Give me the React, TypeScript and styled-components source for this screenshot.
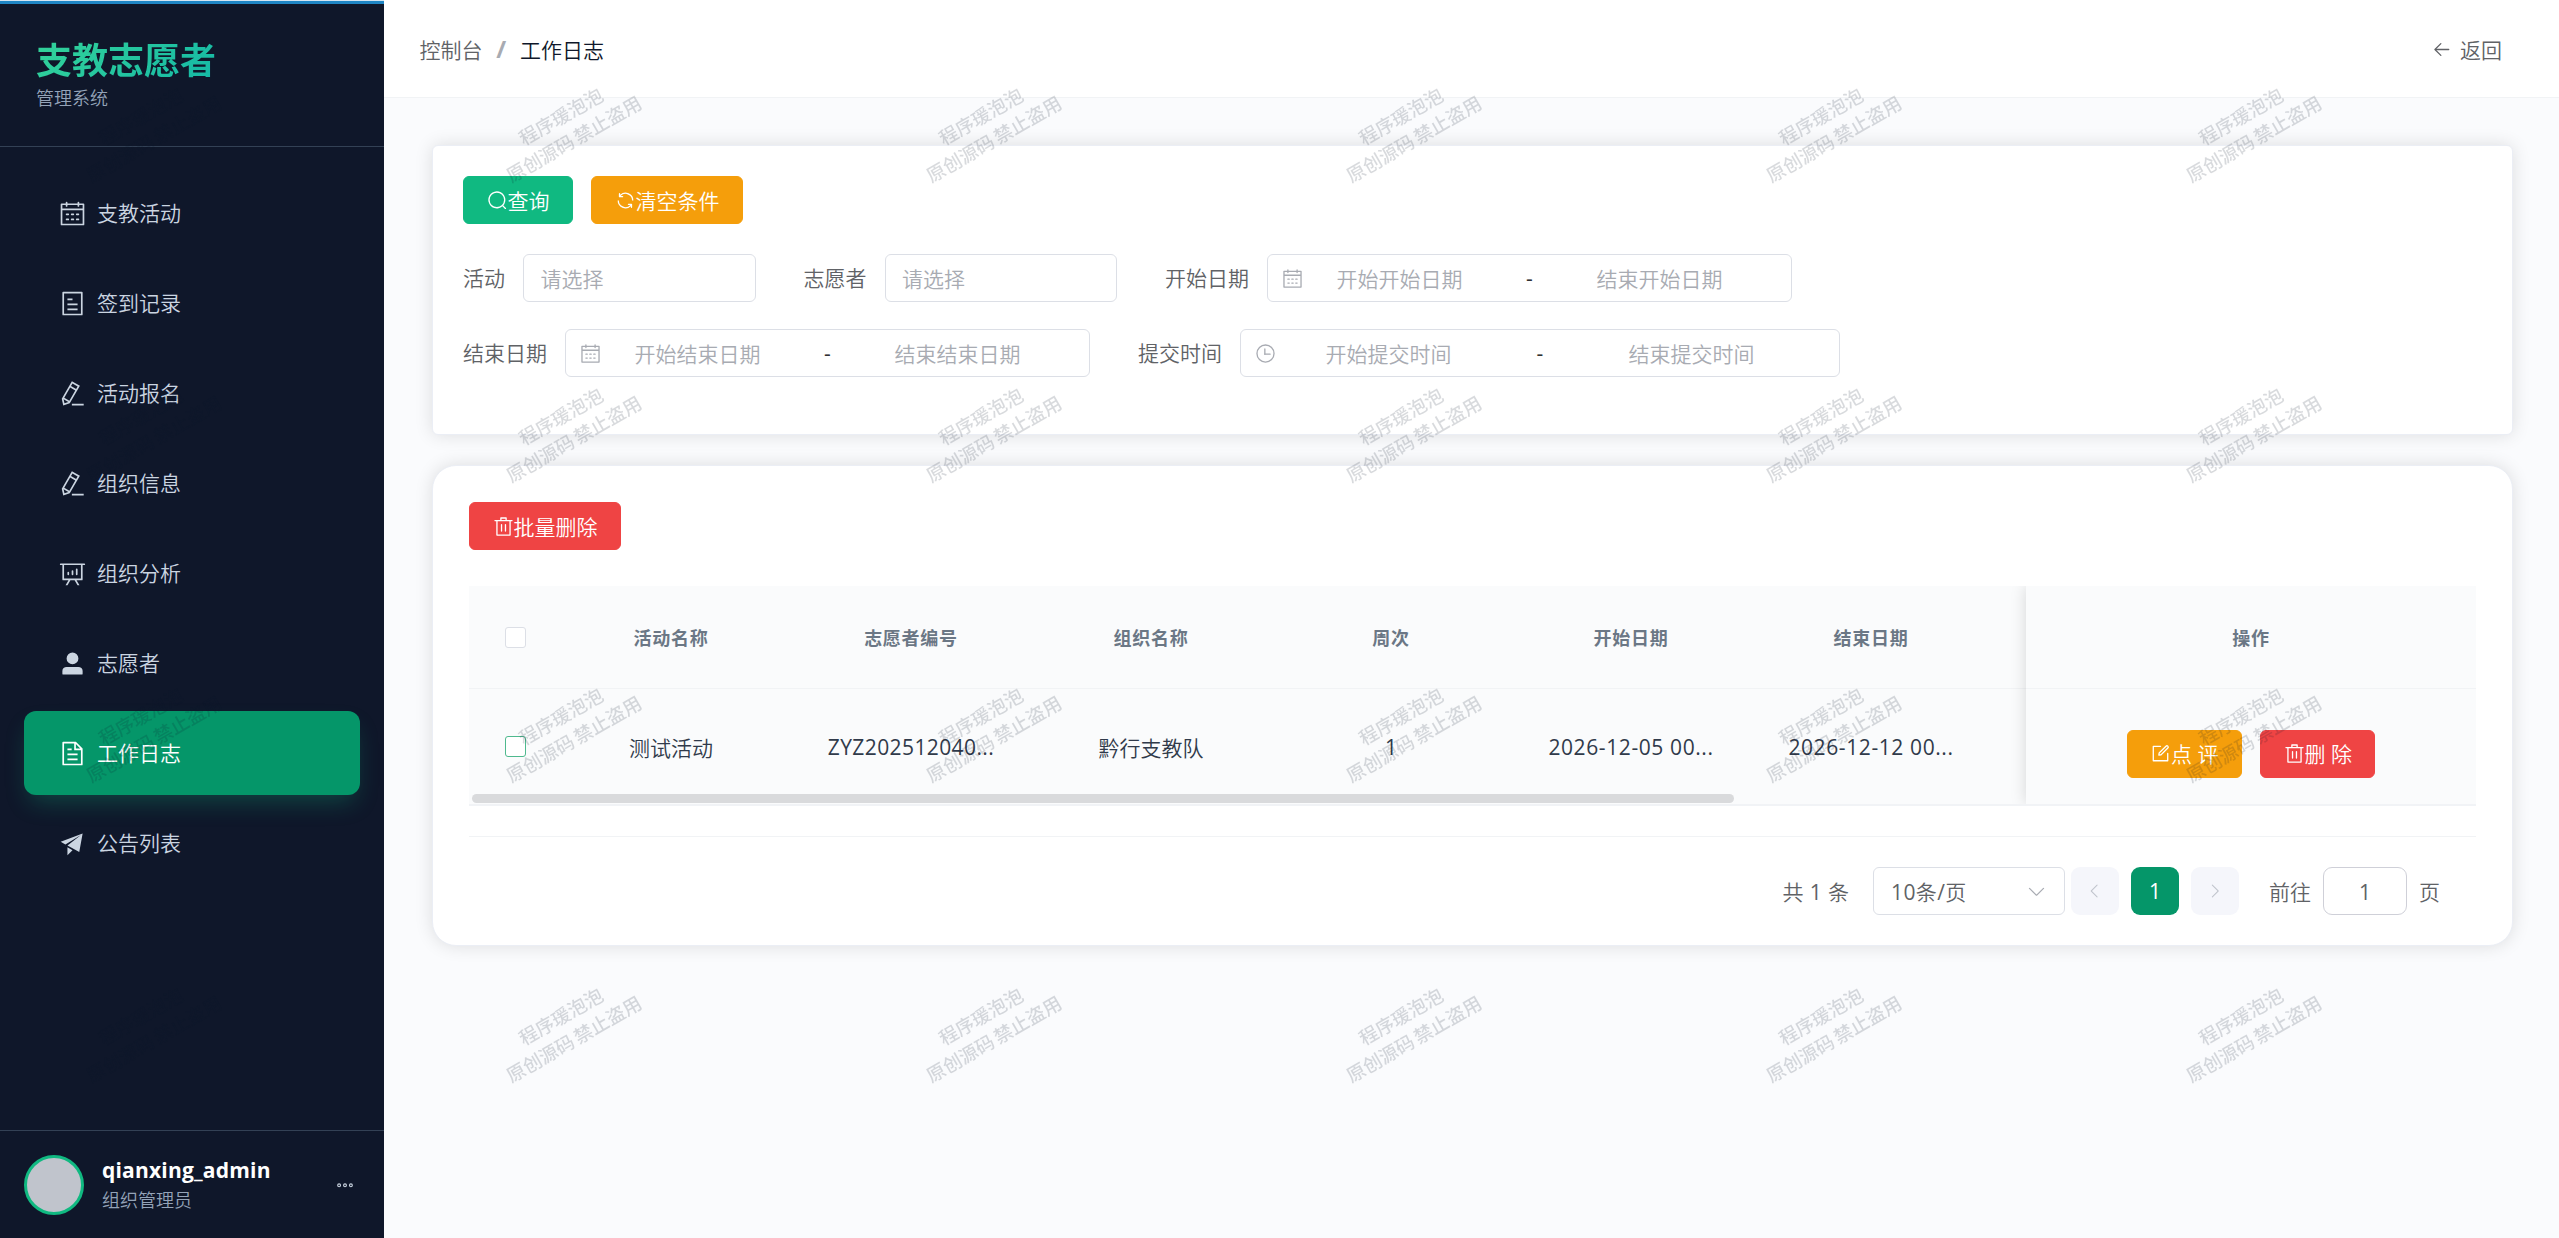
import React from "react";
import styled, { createGlobalStyle, css } from "styled-components";

const STRONG_FONT = `"Open Sans", "Noto Sans CJK SC", sans-serif`;

const GlobalStyle = createGlobalStyle`
  *, *::before, *::after { box-sizing: border-box; }
  html, body { margin: 0; padding: 0; }
  body {
    font-family: "Open Sans", "Noto Sans CJK SC DemiLight", "Noto Sans CJK SC Light", "Noto Sans CJK SC", sans-serif;
    font-size: 21px;
    color: #303133;
    background: #fafbfd;
    overflow: hidden;
  }
  button, input { font-family: inherit; }
`;

const ICONS = {
  calendar: [
    "M128 384v512h768V192H768v32a32 32 0 1 1-64 0v-32H320v32a32 32 0 0 1-64 0v-32H128v128h768v64zm192-256h384V96a32 32 0 1 1 64 0v32h160a32 32 0 0 1 32 32v768a32 32 0 0 1-32 32H96a32 32 0 0 1-32-32V160a32 32 0 0 1 32-32h160V96a32 32 0 0 1 64 0zm-32 384h64a32 32 0 0 1 0 64h-64a32 32 0 0 1 0-64m0 192h64a32 32 0 1 1 0 64h-64a32 32 0 1 1 0-64m192-192h64a32 32 0 0 1 0 64h-64a32 32 0 0 1 0-64m0 192h64a32 32 0 1 1 0 64h-64a32 32 0 1 1 0-64m192-192h64a32 32 0 1 1 0 64h-64a32 32 0 1 1 0-64m0 192h64a32 32 0 1 1 0 64h-64a32 32 0 1 1 0-64",
  ],
  tickets: [
    "M192 128v768h640V128zm-32-64h704a32 32 0 0 1 32 32v832a32 32 0 0 1-32 32H160a32 32 0 0 1-32-32V96a32 32 0 0 1 32-32m160 448h384v64H320zm0-192h192v64H320zm0 384h384v64H320z",
  ],
  editPen: [
    "m199.04 672.64 193.984 112 224-387.968-193.92-112-224 388.032zm-23.872 60.16 32.896 148.288 144.896-45.696zM455.04 229.248l193.92 112 56.704-98.112-193.984-112zM104.32 708.8l384-665.024 304.768 175.936L409.152 884.8h.064l-248.448 78.336zm384 254.272v-64h448v64z",
  ],
  analysis: [
    "m665.216 768 110.848 192h-73.856L591.36 768H433.024L322.176 960H248.32l110.848-192H160a32 32 0 0 1-32-32V192H64a32 32 0 0 1 0-64h896a32 32 0 1 1 0 64h-64v544a32 32 0 0 1-32 32zM832 192H192v512h640zM352 448a32 32 0 0 1 32 32v64a32 32 0 0 1-64 0v-64a32 32 0 0 1 32-32m160-64a32 32 0 0 1 32 32v128a32 32 0 0 1-64 0V416a32 32 0 0 1 32-32m160-64a32 32 0 0 1 32 32v192a32 32 0 1 1-64 0V352a32 32 0 0 1 32-32",
  ],
  user: [
    "M288 320a224 224 0 1 0 448 0 224 224 0 1 0-448 0m544 608H160a32 32 0 0 1-32-32v-96a160 160 0 0 1 160-160h448a160 160 0 0 1 160 160v96a32 32 0 0 1-32 32z",
  ],
  document: [
    "M832 384H576V128H192v768h640zm-26.496-64L640 154.496V320zM160 64h480l256 256v608a32 32 0 0 1-32 32H160a32 32 0 0 1-32-32V96a32 32 0 0 1 32-32m160 448h384v64H320zm0-192h160v64H320zm0 384h384v64H320z",
  ],
  promotion: ["m64 448 832-320-128 704-446.08-243.328L832 192 242.816 545.536zm256 512V657.024L512 768z"],
  more: [
    "M176 416a112 112 0 1 0 0 224 112 112 0 0 0 0-224m0 64a48 48 0 1 1 0 96 48 48 0 0 1 0-96m336-64a112 112 0 1 1 0 224 112 112 0 0 1 0-224m0 64a48 48 0 1 0 0 96 48 48 0 0 0 0-96m336-64a112 112 0 1 1 0 224 112 112 0 0 1 0-224m0 64a48 48 0 1 0 0 96 48 48 0 0 0 0-96",
  ],
  back: [
    "M224 480h640a32 32 0 1 1 0 64H224a32 32 0 0 1 0-64",
    "m237.248 512 265.408 265.344a32 32 0 0 1-45.312 45.312l-288-288a32 32 0 0 1 0-45.312l288-288a32 32 0 1 1 45.312 45.312z",
  ],
  search: [
    "m795.904 750.72 124.992 124.928a32 32 0 0 1-45.248 45.248L750.656 795.904a416 416 0 1 1 45.248-45.248zM480 832a352 352 0 1 0 0-704 352 352 0 0 0 0 704",
  ],
  refresh: [
    "M771.776 794.88A384 384 0 0 1 128 512h64a320 320 0 0 0 555.712 216.448H654.72a32 32 0 1 1 0-64h149.056a32 32 0 0 1 32 32v148.928a32 32 0 1 1-64 0v-50.56zM276.288 295.616h92.992a32 32 0 0 1 0 64H220.16a32 32 0 0 1-32-32V178.56a32 32 0 0 1 64 0v50.56A384 384 0 0 1 896.128 512h-64a320 320 0 0 0-555.776-216.384z",
  ],
  trash: [
    "M160 256H96a32 32 0 0 1 0-64h256V95.936a32 32 0 0 1 32-32h256a32 32 0 0 1 32 32V192h256a32 32 0 1 1 0 64h-64v672a32 32 0 0 1-32 32H192a32 32 0 0 1-32-32zm448-64v-64H416v64zM224 896h576V256H224zm192-128a32 32 0 0 1-32-32V416a32 32 0 0 1 64 0v320a32 32 0 0 1-32 32m192 0a32 32 0 0 1-32-32V416a32 32 0 0 1 64 0v320a32 32 0 0 1-32 32",
  ],
  edit: [
    "M832 512a32 32 0 1 1 64 0v352a32 32 0 0 1-32 32H160a32 32 0 0 1-32-32V160a32 32 0 0 1 32-32h352a32 32 0 0 1 0 64H192v640h640z",
    "m469.952 554.24 52.8-7.552L847.104 222.4a32 32 0 1 0-45.248-45.248L477.44 501.44l-7.552 52.8zm422.4-422.4a96 96 0 0 1 0 135.808l-331.84 331.84a32 32 0 0 1-18.112 9.088L436.8 623.68a32 32 0 0 1-36.224-36.224l15.104-105.6a32 32 0 0 1 9.024-18.112l331.904-331.84a96 96 0 0 1 135.744 0z",
  ],
  clock: [
    "M512 896a384 384 0 1 0 0-768 384 384 0 0 0 0 768m0 64a448 448 0 1 1 0-896 448 448 0 0 1 0 896",
    "M480 256a32 32 0 0 1 32 32v256a32 32 0 0 1-64 0V288a32 32 0 0 1 32-32",
    "M480 512h256q32 0 32 32t-32 32H480q-32 0-32-32t32-32",
  ],
  arrowDown: [
    "M831.872 340.864 512 652.672 192.128 340.864a30.592 30.592 0 0 0-42.752 0 29.12 29.12 0 0 0 0 41.6L489.664 714.24a32 32 0 0 0 44.672 0l340.288-331.712a29.12 29.12 0 0 0 0-41.728 30.592 30.592 0 0 0-42.752 0z",
  ],
  arrowLeft: [
    "M609.408 149.376 277.76 489.6a32 32 0 0 0 0 44.672l331.648 340.352a29.12 29.12 0 0 0 41.728 0 30.592 30.592 0 0 0 0-42.752L339.264 511.936l311.872-319.872a30.592 30.592 0 0 0 0-42.688 29.12 29.12 0 0 0-41.728 0",
  ],
  arrowRight: [
    "M340.864 149.312a30.592 30.592 0 0 0 0 42.752L652.736 512 340.864 831.872a30.592 30.592 0 0 0 0 42.752 29.12 29.12 0 0 0 41.728 0L714.24 534.336a32 32 0 0 0 0-44.672L382.592 149.376a29.12 29.12 0 0 0-41.728 0z",
  ],
};
type IconName = keyof typeof ICONS;

const Svg = styled.svg<{ $size: number }>`
  width: ${(p) => p.$size}px;
  height: ${(p) => p.$size}px;
  flex: none;
  display: block;
  fill: currentColor;
`;

const Icon = ({ name, size = 21 }: { name: IconName; size?: number }) => (
  <Svg viewBox="0 0 1024 1024" $size={size}>
    {ICONS[name].map((d) => (
      <path key={d} d={d} />
    ))}
  </Svg>
);

const Shell = styled.div`
  display: flex;
  width: 100%;
  height: 1238px;
  overflow: hidden;
`;

/* ---- sidebar ---- */
const Sidebar = styled.aside`
  width: 384px;
  flex: none;
  display: flex;
  flex-direction: column;
  background: #0f172a;
  border-top: 1px solid #d5e6f2;
`;

const TopStrip = styled.div`
  height: 3px;
  flex: none;
  background: #1f86c4;
`;

const Brand = styled.div`
  height: 143px;
  padding: 30px 36px 0;
  border-bottom: 1px solid #334155;
`;

const BrandTitle = styled.h1`
  margin: 0;
  width: fit-content;
  font-family: ${STRONG_FONT};
  font-size: 36px;
  line-height: 54px;
  font-weight: 700;
  background: linear-gradient(135deg, #34d399, #14b8a6);
  -webkit-background-clip: text;
  background-clip: text;
  color: transparent;
`;

const BrandSub = styled.div`
  font-size: 18px;
  line-height: 24px;
  margin-top: -2px;
  color: #94a3b8;
`;

const Menu = styled.nav`
  flex: 1;
  display: flex;
  flex-direction: column;
  gap: 6px;
  padding: 24px 24px 0;
`;

const MenuItem = styled.a<{ $active?: boolean }>`
  display: flex;
  align-items: center;
  height: 84px;
  padding-left: 30px;
  gap: 7px;
  border-radius: 12px;
  color: #cbd5e1;
  ${(p) =>
    p.$active &&
    css`
      color: #fff;
      background: #059669;
      box-shadow: 0 12px 24px -6px rgba(16, 185, 129, 0.3);
    `}
`;

const MenuIcon = styled.span`
  width: 36px;
  display: flex;
  justify-content: center;
`;

const MenuLabel = styled.span`
  padding-bottom: 3px;
`;

const UserBar = styled.div`
  height: 108px;
  display: flex;
  align-items: center;
  padding: 0 30px 0 24px;
  border-top: 1px solid #334155;
`;

const Avatar = styled.div`
  width: 60px;
  height: 60px;
  border-radius: 50%;
  border: 3px solid #10b981;
  background: #c0c4cc;
`;

const UserText = styled.div`
  flex: 1;
  margin-left: 18px;
  padding-top: 1px;
`;

const UserName = styled.div`
  font-size: 21px;
  line-height: 30px;
  letter-spacing: 0.2px;
  font-weight: 700;
  color: #fff;
`;

const UserRole = styled.div`
  font-size: 18px;
  line-height: 30px;
  color: #94a3b8;
`;

const MoreButton = styled.span`
  color: #cbd5e1;
`;

/* ---- main ---- */
const Main = styled.main`
  flex: 1;
  min-width: 0;
  display: flex;
  flex-direction: column;
  background: #fafbfd;
`;

const Header = styled.header`
  height: 98px;
  flex: none;
  display: flex;
  align-items: center;
  justify-content: space-between;
  padding: 0 57px 0 35.5px;
  background: #fff;
  border-bottom: 1px solid #f1f3f5;
`;

const Crumbs = styled.div`
  display: flex;
  align-items: center;
  color: #606266;
`;

const CrumbSep = styled.span`
  width: 37.5px;
  text-align: center;
  font-weight: 700;
  font-size: 24px;
  line-height: 28px;
  color: #a8abb2;
`;

const CrumbHere = styled.span`
  color: #0f172a;
`;

const BackLink = styled.a`
  display: flex;
  align-items: center;
  gap: 8px;
  color: #606266;
  svg { margin-top: 2px; }
`;

const Content = styled.div`
  display: flex;
  flex-direction: column;
  gap: 30px;
  padding: 47px 46px 0 48px;
`;

const Card = styled.section<{ $radius: number; $padding: string }>`
  background: #fff;
  border: 1px solid #ebeef5;
  border-radius: ${(p) => p.$radius}px;
  padding: ${(p) => p.$padding};
  box-shadow: 0 0 18px rgba(0, 0, 0, 0.12);
`;

const ButtonRow = styled.div<{ $center?: boolean }>`
  display: flex;
  gap: 18px;
  justify-content: ${(p) => (p.$center ? "center" : "flex-start")};
`;

const Button = styled.button<{ $tone: string }>`
  display: flex;
  align-items: center;
  height: 48px;
  padding: 0 22.5px;
  border: 1px solid ${(p) => p.$tone};
  border-radius: 6px;
  background: ${(p) => p.$tone};
  color: #fff;
  font-size: 21px;
  line-height: 21px;
  white-space: pre;
`;

const ButtonLabel = styled.span`
  padding-top: 2px;
`;

const FormRow = styled.div<{ $top: number }>`
  display: flex;
  gap: 48px;
  margin-top: ${(p) => p.$top}px;
`;

const Field = styled.div`
  display: flex;
  align-items: center;
  gap: 18px;
  height: 48px;
  color: #606266;
`;

const FieldLabel = styled.span`
  padding-bottom: 2px;
`;

const SelectBox = styled.div`
  width: 232.5px;
  height: 48px;
  display: flex;
  align-items: center;
  padding: 0 16.5px;
  border: 1px solid #dcdfe6;
  border-radius: 6px;
  color: #a8abb2;
`;

const RangeBox = styled.div<{ $width: number }>`
  width: ${(p) => p.$width}px;
  height: 48px;
  display: flex;
  align-items: center;
  padding: 0 35px 0 14px;
  border: 1px solid #dcdfe6;
  border-radius: 6px;
  color: #a8abb2;
`;

const RangePart = styled.span`
  flex: 39;
  text-align: center;
`;

const RangeDash = styled.span`
  flex: 13.5;
  text-align: center;
  color: #303133;
`;

/* ---- table ---- */
const TableFrame = styled.div`
  display: flex;
  height: 220px;
  margin-top: 36px;
  border-bottom: 2px solid #f1f3f6;
  overflow: hidden;
`;

const ScrollPane = styled.div`
  position: relative;
  width: 1557px;
  flex: none;
  overflow: hidden;
`;

const FixedPane = styled.div`
  position: relative;
  flex: 1;
  box-shadow: 0 0 15px rgba(0, 0, 0, 0.15);
`;

const Row = styled.div<{ $head?: boolean; $cols: string }>`
  display: grid;
  grid-template-columns: ${(p) => p.$cols};
  align-items: center;
  justify-items: center;
  background: #fafbfc;
  ${(p) =>
    p.$head
      ? css`
          height: 103px;
          border-bottom: 1px solid #f1f3f5;
          font-family: ${STRONG_FONT};
          font-size: 18px;
          letter-spacing: 0.75px;
          font-weight: 700;
          color: #6b7785;
        `
      : css`
          height: 115px;
          color: #303a4a;
        `}
`;

const Cell = styled.div<{ $spacing?: number }>`
  white-space: nowrap;
  letter-spacing: ${(p) => (p.$spacing === undefined ? "inherit" : `${p.$spacing}px`)};
`;

const Check = styled.span<{ $hot?: boolean }>`
  width: 21px;
  height: 21px;
  margin-left: 10px;
  border: 1px solid ${(p) => (p.$hot ? "#4fb98e" : "#dcdfe6")};
  border-radius: 3px;
  background: #fff;
`;

const ActionCell = styled.div`
  padding-top: 14px;
`;

const ScrollThumb = styled.div`
  position: absolute;
  left: 3px;
  bottom: 1px;
  width: 1262px;
  height: 9px;
  border-radius: 4.5px;
  background: #d9dadc;
`;

const TableBody = styled.div`
  height: 117px;
  background: #fafbfc;
`;

/* ---- pagination ---- */
const Pager = styled.div`
  display: flex;
  align-items: center;
  margin-top: 30px;
  padding: 30px 36px 0 0;
  border-top: 1px solid #f1f3f5;
  justify-content: flex-end;
  color: #606266;
`;

const Total = styled.span`
  margin-right: 23.5px;
  letter-spacing: 0.4px;
`;

const SizeSelect = styled.div`
  width: 192px;
  height: 48px;
  display: flex;
  align-items: center;
  justify-content: space-between;
  padding: 0 17px;
  border: 1px solid #dcdfe6;
  border-radius: 6px;
  letter-spacing: 0.4px;
  svg { color: #a8abb2; }
`;

const PageButton = styled.span<{ $active?: boolean; $left: number }>`
  width: 48px;
  height: 48px;
  margin-left: ${(p) => p.$left}px;
  display: flex;
  align-items: center;
  justify-content: center;
  border-radius: 9px;
  background: ${(p) => (p.$active ? "#059669" : "#f5f6fb")};
  color: ${(p) => (p.$active ? "#fff" : "#c0c4cc")};
`;

const JumpLabel = styled.span<{ $left: number }>`
  margin-left: ${(p) => p.$left}px;
`;

const JumpInput = styled.div`
  width: 84px;
  height: 48px;
  margin-left: 12px;
  display: flex;
  align-items: center;
  justify-content: center;
  padding-top: 1px;
  border: 1px solid #cfd0d8;
  border-radius: 9px;
`;

/* ---- watermark ---- */
const WatermarkLayer = styled.div`
  position: fixed;
  inset: 0;
  overflow: hidden;
  pointer-events: none;
`;

const WatermarkGrid = styled.div`
  display: grid;
  grid-template-columns: repeat(6, 420px);
  grid-auto-rows: 300px;
  margin: -23px 0 0 -63px;
`;

const WatermarkTile = styled.div`
  display: flex;
  align-items: center;
  justify-content: center;
`;

const WatermarkText = styled.div`
  transform: rotate(-30deg);
  text-align: center;
  font-family: "Open Sans", "Noto Sans CJK SC Medium", "Noto Sans CJK SC", sans-serif;
  font-size: 18.7px;
  line-height: 25.5px;
  word-spacing: -2px;
  color: rgba(15, 23, 42, 0.16);
  white-space: nowrap;
`;

const MENU: { icon: IconName; label: string; active?: boolean }[] = [
  { icon: "calendar", label: "支教活动" },
  { icon: "tickets", label: "签到记录" },
  { icon: "editPen", label: "活动报名" },
  { icon: "editPen", label: "组织信息" },
  { icon: "analysis", label: "组织分析" },
  { icon: "user", label: "志愿者" },
  { icon: "document", label: "工作日志", active: true },
  { icon: "promotion", label: "公告列表" },
];

const COLUMNS = [
  { title: "活动名称", value: "测试活动", spacing: 0 },
  { title: "志愿者编号", value: "ZYZ202512040...", spacing: 0.4 },
  { title: "组织名称", value: "黔行支教队", spacing: 0 },
  { title: "周次", value: "1", spacing: 0 },
  { title: "开始日期", value: "2026-12-05 00...", spacing: 0.6 },
  { title: "结束日期", value: "2026-12-12 00...", spacing: 0.6 },
];

const DATA_COLS = "82px repeat(7, 240px)";

const ActionButton = ({ tone, icon, label }: { tone: string; icon: IconName; label: string }) => (
  <Button $tone={tone}>
    <Icon name={icon} />
    <ButtonLabel>{label}</ButtonLabel>
  </Button>
);

const SelectField = ({ label }: { label: string }) => (
  <Field>
    <FieldLabel>{label}</FieldLabel>
    <SelectBox>请选择</SelectBox>
  </Field>
);

const RangeField = ({ label, icon = "calendar", width = 525 }: { label: string; icon?: IconName; width?: number }) => (
  <Field>
    <FieldLabel>{label}</FieldLabel>
    <RangeBox $width={width}>
      <Icon name={icon} />
      <RangePart>开始{label}</RangePart>
      <RangeDash>-</RangeDash>
      <RangePart>结束{label}</RangePart>
    </RangeBox>
  </Field>
);

export default function App() {
  return (
    <>
      <GlobalStyle />
      <Shell>
        <Sidebar>
          <TopStrip />
          <Brand>
            <BrandTitle>支教志愿者</BrandTitle>
            <BrandSub>管理系统</BrandSub>
          </Brand>
          <Menu>
            {MENU.map((m) => (
              <MenuItem key={m.label} $active={m.active}>
                <MenuIcon>
                  <Icon name={m.icon} size={27} />
                </MenuIcon>
                <MenuLabel>{m.label}</MenuLabel>
              </MenuItem>
            ))}
          </Menu>
          <UserBar>
            <Avatar />
            <UserText>
              <UserName>qianxing_admin</UserName>
              <UserRole>组织管理员</UserRole>
            </UserText>
            <MoreButton>
              <Icon name="more" size={18} />
            </MoreButton>
          </UserBar>
        </Sidebar>
        <Main>
          <Header>
            <Crumbs>
              <span>控制台</span>
              <CrumbSep>/</CrumbSep>
              <CrumbHere>工作日志</CrumbHere>
            </Crumbs>
            <BackLink>
              <Icon name="back" />
              返回
            </BackLink>
          </Header>
          <Content>
            <Card $radius={6} $padding="30px">
              <ButtonRow>
                <ActionButton tone="#10b981" icon="search" label="查询" />
                <ActionButton tone="#f59e0b" icon="refresh" label="清空条件" />
              </ButtonRow>
              <FormRow $top={30}>
                <SelectField label="活动" />
                <SelectField label="志愿者" />
                <RangeField label="开始日期" />
              </FormRow>
              <FormRow $top={27}>
                <RangeField label="结束日期" />
                <RangeField label="提交时间" icon="clock" width={600} />
              </FormRow>
              <FormRow $top={27} />
            </Card>
            <Card $radius={24} $padding="36px 36px 30px">
              <ButtonRow>
                <ActionButton tone="#ef4444" icon="trash" label="批量删除" />
              </ButtonRow>
              <TableFrame>
                <ScrollPane>
                  <Row $head $cols={DATA_COLS}>
                    <Check />
                    {COLUMNS.map((c) => (
                      <Cell key={c.title}>{c.title}</Cell>
                    ))}
                  </Row>
                  <TableBody>
                    <Row $cols={DATA_COLS}>
                      <Check $hot />
                      {COLUMNS.map((c) => (
                        <Cell key={c.title} $spacing={c.spacing}>
                          {c.value}
                        </Cell>
                      ))}
                    </Row>
                  </TableBody>
                  <ScrollThumb />
                </ScrollPane>
                <FixedPane>
                  <Row $head $cols="1fr">
                    <Cell>操作</Cell>
                  </Row>
                  <TableBody>
                    <Row $cols="1fr">
                      <ActionCell>
                        <ButtonRow $center>
                          <ActionButton tone="#f59e0b" icon="edit" label="点 评" />
                          <ActionButton tone="#ef4444" icon="trash" label="删 除" />
                        </ButtonRow>
                      </ActionCell>
                    </Row>
                  </TableBody>
                </FixedPane>
              </TableFrame>
              <Pager>
                <Total>共 1 条</Total>
                <SizeSelect>
                  10条/页
                  <Icon name="arrowDown" />
                </SizeSelect>
                <PageButton $left={6}>
                  <Icon name="arrowLeft" size={18} />
                </PageButton>
                <PageButton $left={12} $active>
                  1
                </PageButton>
                <PageButton $left={12}>
                  <Icon name="arrowRight" size={18} />
                </PageButton>
                <JumpLabel $left={30}>前往</JumpLabel>
                <JumpInput>1</JumpInput>
                <JumpLabel $left={12}>页</JumpLabel>
              </Pager>
            </Card>
          </Content>
        </Main>
      </Shell>
      <WatermarkLayer>
        <WatermarkGrid>
          {Array.from({ length: 24 }, (_, i) => (
            <WatermarkTile key={i}>
              <WatermarkText>
                程序瑗泡泡
                <br />
                原创源码 禁止盗用
              </WatermarkText>
            </WatermarkTile>
          ))}
        </WatermarkGrid>
      </WatermarkLayer>
    </>
  );
}
